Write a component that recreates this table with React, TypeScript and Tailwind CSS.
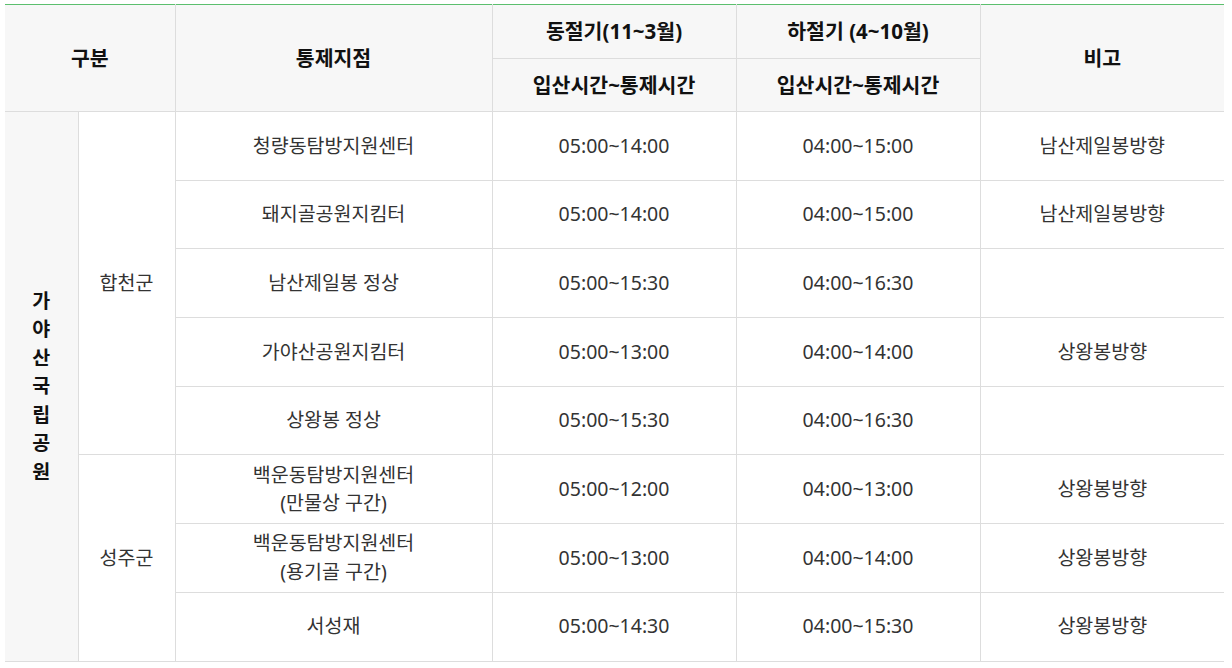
import React from 'react';

type Row = { place: string[]; winter: string; summer: string; note: string };

const hapcheon: Row[] = [
  { place: ['청량동탐방지원센터'], winter: '05:00~14:00', summer: '04:00~15:00', note: '남산제일봉방향' },
  { place: ['돼지골공원지킴터'], winter: '05:00~14:00', summer: '04:00~15:00', note: '남산제일봉방향' },
  { place: ['남산제일봉 정상'], winter: '05:00~15:30', summer: '04:00~16:30', note: '' },
  { place: ['가야산공원지킴터'], winter: '05:00~13:00', summer: '04:00~14:00', note: '상왕봉방향' },
  { place: ['상왕봉 정상'], winter: '05:00~15:30', summer: '04:00~16:30', note: '' },
];

const seongju: Row[] = [
  { place: ['백운동탐방지원센터', '(만물상 구간)'], winter: '05:00~12:00', summer: '04:00~13:00', note: '상왕봉방향' },
  { place: ['백운동탐방지원센터', '(용기골 구간)'], winter: '05:00~13:00', summer: '04:00~14:00', note: '상왕봉방향' },
  { place: ['서성재'], winter: '05:00~14:30', summer: '04:00~15:30', note: '상왕봉방향' },
];

const th = 'border border-[#dddddd] bg-[#f7f7f7] font-bold text-[#111] text-center align-middle';
const td = 'border border-[#dddddd] text-center align-middle text-[#333]';

const BodyRows: React.FC<{ rows: Row[]; region: string; first?: boolean }> = ({ rows, region, first }) => (
  <>
    {rows.map((r, i) => (
      <tr key={i} className="h-[68.7px]">
        {first && i === 0 && (
          <td rowSpan={8} className={`${th} text-[19.5px] px-2 border-l-0`}>
            {'가야산국립공원'.split('').map((c, k) => (
              <div key={k}>{c}</div>
            ))}
          </td>
        )}
        {i === 0 && (
          <td rowSpan={rows.length} className={td}>
            {region}
          </td>
        )}
        <td className={td}>
          {r.place.map((p, k) => (
            <div key={k}>{p}</div>
          ))}
        </td>
        <td className={td}>{r.winter}</td>
        <td className={td}>{r.summer}</td>
        <td className={`${td} border-r-0`}>{r.note}</td>
      </tr>
    ))}
  </>
);

export default function App() {
  return (
    <div className="bg-white pl-[5px] pt-[4px] w-[1232px] h-[668px] overflow-hidden" style={{ fontFamily: '"Noto Sans", "Noto Sans CJK KR", sans-serif' }}>
      <table className="border-collapse table-fixed w-[1219px] text-[19.5px] leading-[28.5px] border-t border-t-[#5cbf6e]">
        <colgroup>
          <col className="w-[73px]" />
          <col className="w-[97px]" />
          <col className="w-[317px]" />
          <col className="w-[244px]" />
          <col className="w-[244px]" />
          <col className="w-[244px]" />
        </colgroup>
        <thead className="text-[20.5px]">
          <tr className="h-[54px]">
            <th colSpan={2} rowSpan={2} className={`${th} border-t-[#5cbf6e] border-l-0`}>구분</th>
            <th rowSpan={2} className={`${th} border-t-[#5cbf6e]`}>통제지점</th>
            <th className={`${th} border-t-[#5cbf6e]`}>동절기(11~3월)</th>
            <th className={`${th} border-t-[#5cbf6e]`}>하절기 (4~10월)</th>
            <th rowSpan={2} className={`${th} border-t-[#5cbf6e] border-r-0`}>비고</th>
          </tr>
          <tr className="h-[53px]">
            <th className={th}>입산시간~통제시간</th>
            <th className={th}>입산시간~통제시간</th>
          </tr>
        </thead>
        <tbody>
          <BodyRows rows={hapcheon} region="합천군" first />
          <BodyRows rows={seongju} region="성주군" />
        </tbody>
      </table>
    </div>
  );
}
